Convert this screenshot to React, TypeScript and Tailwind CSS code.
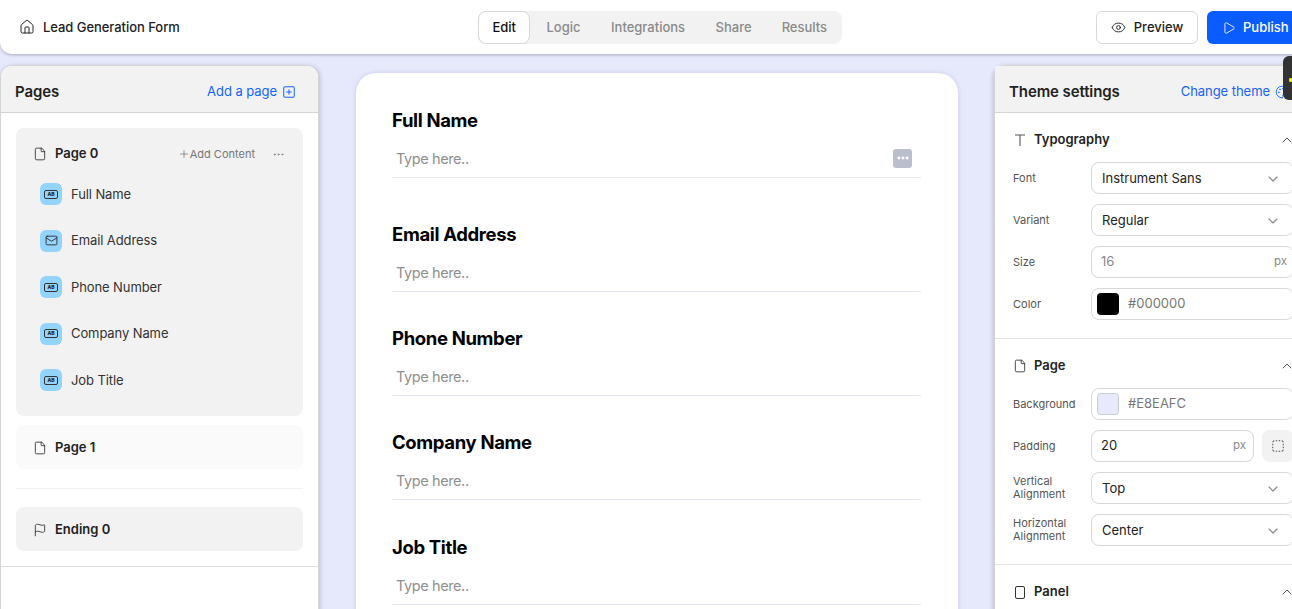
import {
  ChevronDown,
  ChevronUp,
  Ellipsis,
  Eye,
  File,
  Flag,
  House,
  Mail,
  Palette,
  Play,
  Plus,
  SquareDashed,
  SquarePlus,
} from 'lucide-react';
import type { ReactNode } from 'react';

function AbIcon() {
  return (
    <span className="flex h-[9px] w-[14px] items-center justify-center rounded-[2px] border-[1.5px] border-[#333] text-[5px] leading-none font-extrabold text-[#222]">
      AB
    </span>
  );
}

// plain sans T, lucide's Type has serifs
function PlainT() {
  return (
    <svg viewBox="0 0 14 14" className="h-[14px] w-[14px] text-[#555]" fill="none" stroke="currentColor" strokeWidth="1.1">
      <path d="M2 2h10M7 2v11" />
    </svg>
  );
}

function ContentItem({ label, mail }: { label: string; mail?: boolean }) {
  return (
    <div className="flex h-[46.5px] items-center gap-[9px] pl-[24px]">
      <span className="flex h-[22px] w-[22px] items-center justify-center rounded-[6px] bg-[#93d3ff]">
        {mail ? <Mail className="h-[13px] w-[13px] text-[#333]" strokeWidth={1.75} /> : <AbIcon />}
      </span>
      <span className="text-[13px] tracking-[-0.1px] text-[#333]">{label}</span>
    </div>
  );
}

function PanelHead({ title, action, icon }: { title: string; action: string; icon: ReactNode }) {
  return (
    <div className="flex h-[47px] shrink-0 items-center justify-between border-b border-[#d4d4d6] bg-[#f2f2f2] pt-[6px] pr-[22px] pl-[14px]">
      <span className="text-[15px] font-semibold tracking-[-0.1px] text-[#222]">{title}</span>
      <span className="flex items-center gap-[5px] text-[13px] tracking-[-0.05px] text-[#1463ff]">
        {action}
        {icon}
      </span>
    </div>
  );
}

function FormField({ label, first, showDots }: { label: string; first?: boolean; showDots?: boolean }) {
  return (
    <div className={first ? 'mb-[42.5px]' : 'mb-[33.4px]'}>
      <div className="h-[28px] text-[18.5px] leading-[26px] font-bold tracking-[-0.35px] text-black">{label}</div>
      <div className="mt-[4px] flex h-[39px] items-center justify-between border-b border-[#e3e6ee] pt-[2px] pr-[9px] pl-[4px]">
        <span className="text-[14.5px] tracking-[-0.4px] text-[#8f8f8f]">Type here..</span>
        {showDots && (
          <span className="-mt-[2px] flex h-[19px] w-[19px] items-center justify-center rounded-[3px] bg-[#b9bfcd]">
            <Ellipsis className="h-[14px] w-[14px] text-white" strokeWidth={3} />
          </span>
        )}
      </div>
    </div>
  );
}

function SettingRow({ label, children }: { label: string; children: ReactNode }) {
  return (
    <div className="flex h-[32px] items-center">
      <span className="w-[78px] shrink-0 text-[11px] leading-[13px] text-[#555]">{label}</span>
      {children}
    </div>
  );
}

function SelectBox({ value }: { value: string }) {
  return (
    <div className="flex h-[32px] w-[203px] items-center justify-between rounded-[8px] border border-[#d8d8d8] pt-px pr-[12px] pl-[10px] text-[13px] text-[#222]">
      {value}
      <ChevronDown className="h-[16px] w-[16px] text-[#888]" strokeWidth={1.75} />
    </div>
  );
}

function SwatchBox({ color, value, bordered }: { color: string; value: string; bordered?: boolean }) {
  return (
    <div className="flex h-[32px] w-[203px] items-center gap-[9px] rounded-[8px] border border-[#d8d8d8] pl-[5px] text-[13px] text-[#777]">
      <span
        className={`h-[22px] w-[22px] rounded-[4px] ${bordered ? 'border border-[#c9cbdc]' : ''}`}
        style={{ backgroundColor: color }}
      />
      {value}
    </div>
  );
}

function SectionHead({ icon, title }: { icon: ReactNode; title: string }) {
  return (
    <div className="flex h-[22px] items-center justify-between pr-[16px]">
      <span className="flex items-center gap-[7px] text-[13px] font-semibold text-[#222]">
        {icon}
        {title}
      </span>
      <ChevronUp className="h-[16px] w-[16px] text-[#555]" strokeWidth={1.5} />
    </div>
  );
}

export default function App() {
  return (
    <div className="h-[609px] w-[1292px] overflow-hidden bg-[#e6e8fb] font-['Inter',sans-serif]">
      <div className="w-[1320px]">
        <header className="relative z-10 grid h-[54px] grid-cols-[1fr_auto_1fr] items-center rounded-b-[12px] bg-white px-[19px] shadow-[0_1px_3px_rgba(60,60,80,0.35)]">
          <div className="flex items-center gap-[8px] text-[13px] font-medium tracking-[-0.05px] text-[#222]">
            <House className="h-[16px] w-[16px]" strokeWidth={1.5} />
            <span className="pt-px">Lead Generation Form</span>
          </div>
          <nav className="flex h-[33px] items-center rounded-[8px] bg-[#f2f2f2] text-[13px] font-medium text-[#8a8a8a]">
            <span className="flex h-[33px] items-center rounded-[8px] border border-[#d8d8d8] bg-white px-[13.5px] pt-px text-[#111]">
              Edit
            </span>
            <span className="pt-px pr-[15px] pl-[16px]">Logic</span>
            <span className="px-[15.5px] pt-px">Integrations</span>
            <span className="px-[15px] pt-px">Share</span>
            <span className="pt-px pr-[15px] pl-[15px]">Results</span>
          </nav>
          <div className="flex items-center justify-end gap-[9px]">
            <span className="flex h-[33px] w-[102px] items-center justify-center gap-[8px] rounded-[6px] border border-[#d8d8d8] pt-px text-[13px] font-medium text-[#222]">
              <Eye className="h-[15px] w-[15px]" strokeWidth={1.5} />
              Preview
            </span>
            <span className="flex h-[33px] w-[94px] items-center gap-[7px] rounded-[6px] bg-[#0a5cff] pt-px pl-[15px] text-[13px] font-medium text-white">
              <Play className="h-[14px] w-[14px]" strokeWidth={1.5} />
              Publish
            </span>
          </div>
        </header>

        <div className="flex items-start">
          <aside className="mt-[11px] flex h-[600px] w-[319px] shrink-0 flex-col overflow-hidden rounded-t-[12px] border-x border-t border-[#d4d4d6] bg-white shadow-[1px_1px_4px_rgba(60,60,80,0.25)]">
            <PanelHead
              title="Pages"
              action="Add a page"
              icon={<SquarePlus className="h-[14px] w-[14px]" strokeWidth={1.75} />}
            />
            <div className="border-b border-[#dcdcde] px-[15px] pt-[15px] pb-[15px]">
              <div className="h-[288px] rounded-[8px] bg-[#f2f2f2]">
                <div className="flex h-[52px] items-center pr-[18px] pl-[17px]">
                  <File className="h-[14px] w-[14px] text-[#333]" strokeWidth={1.5} />
                  <span className="ml-[8px] text-[13px] font-semibold text-[#222]">Page 0</span>
                  <span className="ml-auto flex items-center text-[11px] text-[#777]">
                    <Plus className="h-[12px] w-[12px]" strokeWidth={1.5} />
                    Add Content
                  </span>
                  <Ellipsis className="ml-[17px] h-[13px] w-[13px] text-[#777]" strokeWidth={1.5} />
                </div>
                <div className="-mt-[9px]">
                  <ContentItem label="Full Name" />
                  <ContentItem label="Email Address" mail />
                  <ContentItem label="Phone Number" />
                  <ContentItem label="Company Name" />
                  <ContentItem label="Job Title" />
                </div>
              </div>
              <div className="mt-[9px] flex h-[44px] items-center gap-[8px] rounded-[8px] bg-[#fafafa] pt-px pl-[17px] text-[13px] font-semibold text-[#222]">
                <File className="h-[14px] w-[14px] text-[#333]" strokeWidth={1.5} />
                Page 1
              </div>
              <div className="mt-[19px] mb-[18px] h-px bg-[#f2f2f2]" />
              <div className="flex h-[44px] items-center gap-[8px] rounded-[8px] bg-[#f2f2f2] pt-px pl-[17px] text-[13px] font-semibold text-[#222]">
                <Flag className="h-[14px] w-[14px] text-[#333]" strokeWidth={1.5} />
                Ending 0
              </div>
            </div>
          </aside>

          <main className="mt-[19px] ml-[37px] h-[600px] w-[602px] shrink-0 rounded-[20px] bg-white px-[36px] pt-[34px] shadow-[0_0_4px_rgba(120,125,200,0.25)]">
            <div className="w-[529px]">
              <FormField label="Full Name" first showDots />
              <FormField label="Email Address" />
              <FormField label="Phone Number" />
              <FormField label="Company Name" />
              <FormField label="Job Title" />
            </div>
          </main>

          <aside className="relative mt-[11px] ml-[36px] h-[600px] w-[318px] shrink-0 rounded-t-[12px] border-x border-t border-[#d4d4d6] bg-white shadow-[-1px_1px_4px_rgba(60,60,80,0.25)]">
            <PanelHead
              title="Theme settings"
              action="Change theme"
              icon={<Palette className="h-[14px] w-[14px]" strokeWidth={1.5} />}
            />
            <div className="border-b border-[#e4e4e6] pt-[16px] pb-[18px] pl-[18px]">
              <SectionHead icon={<PlainT />} title="Typography" />
              <div className="mt-[11px] flex flex-col gap-[10px]">
                <SettingRow label="Font">
                  <SelectBox value="Instrument Sans" />
                </SettingRow>
                <SettingRow label="Variant">
                  <SelectBox value="Regular" />
                </SettingRow>
                <SettingRow label="Size">
                  <div className="flex h-[32px] w-[203px] items-center justify-between rounded-[8px] border border-[#d8d8d8] pr-[6px] pl-[9px] text-[13px] text-[#888]">
                    16
                    <span className="text-[11.5px]">px</span>
                  </div>
                </SettingRow>
                <SettingRow label="Color">
                  <SwatchBox color="#000000" value="#000000" />
                </SettingRow>
              </div>
            </div>
            <div className="border-b border-[#e4e4e6] pt-[16px] pb-[18px] pl-[18px]">
              <SectionHead icon={<File className="h-[14px] w-[14px] text-[#333]" strokeWidth={1.5} />} title="Page" />
              <div className="mt-[11px] flex flex-col gap-[10px]">
                <SettingRow label="Background">
                  <SwatchBox color="#E8EAFC" value="#E8EAFC" bordered />
                </SettingRow>
                <SettingRow label="Padding">
                  <div className="flex h-[32px] w-[163px] items-center justify-between rounded-[8px] border border-[#d8d8d8] pr-[7px] pl-[9px] text-[13px] text-[#222]">
                    20
                    <span className="text-[11.5px] text-[#888]">px</span>
                  </div>
                  <span className="ml-[8px] flex h-[32px] w-[32px] items-center justify-center rounded-[8px] bg-[#f2f2f2]">
                    <SquareDashed className="h-[14px] w-[14px] text-[#333]" strokeWidth={1.5} />
                  </span>
                </SettingRow>
                <SettingRow label="Vertical Alignment">
                  <SelectBox value="Top" />
                </SettingRow>
                <SettingRow label="Horizontal Alignment">
                  <SelectBox value="Center" />
                </SettingRow>
              </div>
            </div>
            <div className="pt-[16px] pl-[18px]">
              <SectionHead
                icon={<span className="mx-[2px] block h-[13px] w-[10px] rounded-[2px] border-[1.5px] border-[#333]" />}
                title="Panel"
              />
            </div>
            <div className="absolute top-[-10px] left-[288px] h-[44px] w-[30px] rounded-l-[6px] bg-[#333]">
              <span className="absolute top-[22px] left-[6px] h-[4px] w-[4px] rounded-[1px] bg-[#e6e619]" />
            </div>
          </aside>
        </div>
      </div>
    </div>
  );
}
